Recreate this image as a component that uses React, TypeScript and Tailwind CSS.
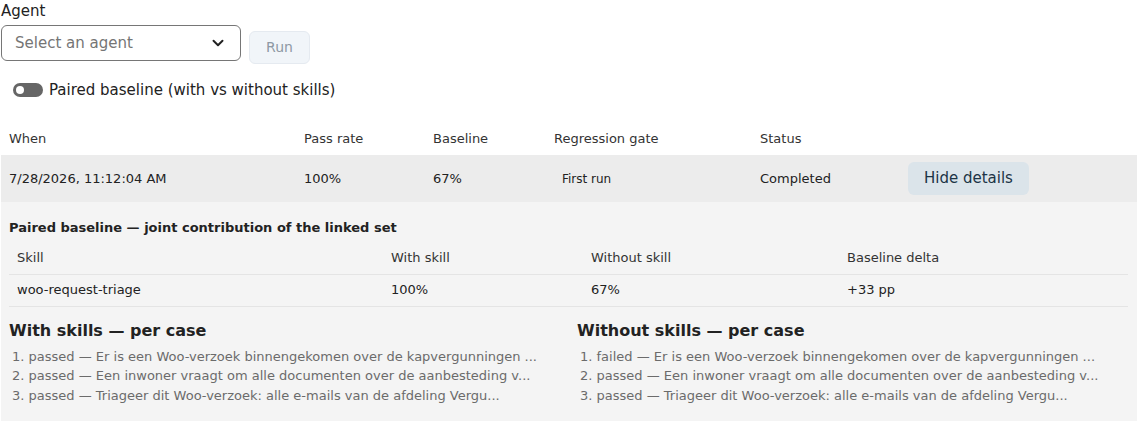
import React from "react";
import { ChevronDown } from "lucide-react";

const withCases = [
  "passed — Er is een Woo-verzoek binnengekomen over de kapvergunningen ...",
  "passed — Een inwoner vraagt om alle documenten over de aanbesteding v...",
  "passed — Triageer dit Woo-verzoek: alle e-mails van de afdeling Vergu...",
];
const withoutCases = [
  "failed — Er is een Woo-verzoek binnengekomen over de kapvergunningen ...",
  "passed — Een inwoner vraagt om alle documenten over de aanbesteding v...",
  "passed — Triageer dit Woo-verzoek: alle e-mails van de afdeling Vergu...",
];

function CaseList({ title, items }: { title: string; items: string[] }) {
  return (
    <div>
      <h3 className="text-[16px] leading-[24px] font-bold text-[#222]">{title}</h3>
      <ol className="mt-[4px] list-decimal list-inside pl-[3px] text-[13px] leading-[19.5px] text-[#6b6b6b]">
        {items.map((t, i) => (
          <li key={i} className="whitespace-nowrap">
            {t}
          </li>
        ))}
      </ol>
    </div>
  );
}

export default function App() {
  return (
    <div
      className="w-[1137px] px-[1px] bg-white text-[#222]"
      style={{ fontFamily: '"DejaVu Sans", sans-serif' }}
    >
      <div className="text-[15px] leading-[22px]">Agent</div>
      <div className="flex items-start gap-[8px] mt-[3px]">
        <div className="w-[240px] h-[36px] border border-[#767676] rounded-[6px] flex items-center justify-between pl-[13px] pr-[13px]">
          <span className="text-[15px] text-[#757575]">Select an agent</span>
          <ChevronDown size={18} strokeWidth={2.6} color="#222" />
        </div>
        <button className="mt-[6px] h-[33px] w-[61px] rounded-[6px] bg-[#f1f5f9] border border-[#e5eaf0] text-[14px] text-[#8e99a4]">
          Run
        </button>
      </div>

      <div className="flex items-center h-[22px] mt-[15px] pl-[12px] gap-[6px]">
        <span className="relative inline-block w-[30px] h-[14px] rounded-full bg-[#666]">
          <span className="absolute left-[3px] top-[3px] w-[8px] h-[8px] rounded-full bg-white" />
        </span>
        <span className="text-[15px] leading-[22px]">Paired baseline (with vs without skills)</span>
      </div>

      <table className="mt-[21px] w-[1136px] table-fixed border-collapse text-[13px]">
        <colgroup>
          <col className="w-[295px]" />
          <col className="w-[129px]" />
          <col className="w-[121px]" />
          <col className="w-[206px]" />
          <col className="w-[148px]" />
          <col />
        </colgroup>
        <thead>
          <tr className="h-[33px] text-left text-[#333]">
            <th className="font-normal pl-[8px]">When</th>
            <th className="font-normal pl-[8px]">Pass rate</th>
            <th className="font-normal pl-[8px]">Baseline</th>
            <th className="font-normal pl-[8px]">Regression gate</th>
            <th className="font-normal pl-[8px]">Status</th>
            <th />
          </tr>
        </thead>
        <tbody>
          <tr className="h-[47px] bg-[#ececec] text-[#222]">
            <td className="pl-[8px]">7/28/2026, 11:12:04 AM</td>
            <td className="pl-[8px]">100%</td>
            <td className="pl-[8px]">67%</td>
            <td className="pl-[8px]">
              <span className="px-[8px] text-[12px]">First run</span>
            </td>
            <td className="pl-[8px]">Completed</td>
            <td className="pl-[8px]">
              <button className="h-[33px] px-[16px] rounded-[6px] bg-[#dbe4ea] text-[15px] text-[#1c3446]">
                Hide details
              </button>
            </td>
          </tr>
          <tr>
            <td colSpan={6} className="p-0">
              <div className="bg-[#f4f4f4] px-[8px] pt-[15px] pb-[16px]">
                <h3 className="text-[13px] leading-[21px] font-bold text-[#222]">
                  Paired baseline — joint contribution of the linked set
                </h3>
                <table className="mt-[4px] w-[1119px] table-fixed border-collapse text-[13px]">
                  <colgroup>
                    <col className="w-[374px]" />
                    <col className="w-[200px]" />
                    <col className="w-[256px]" />
                    <col />
                  </colgroup>
                  <thead>
                    <tr className="h-[32px] text-left text-[#333] border-b border-[#e4e4e4]">
                      <th className="font-normal pl-[8px]">Skill</th>
                      <th className="font-normal pl-[8px]">With skill</th>
                      <th className="font-normal pl-[8px]">Without skill</th>
                      <th className="font-normal pl-[8px]">Baseline delta</th>
                    </tr>
                  </thead>
                  <tbody>
                    <tr className="h-[32px] border-b border-[#e4e4e4] text-[#222]">
                      <td className="pl-[8px]">woo-request-triage</td>
                      <td className="pl-[8px]">100%</td>
                      <td className="pl-[8px]">67%</td>
                      <td className="pl-[8px]">+33 pp</td>
                    </tr>
                  </tbody>
                </table>
                <div className="mt-[12px] grid grid-cols-2 gap-[16px] w-[1120px]">
                  <CaseList title="With skills — per case" items={withCases} />
                  <CaseList title="Without skills — per case" items={withoutCases} />
                </div>
              </div>
            </td>
          </tr>
        </tbody>
      </table>
    </div>
  );
}
